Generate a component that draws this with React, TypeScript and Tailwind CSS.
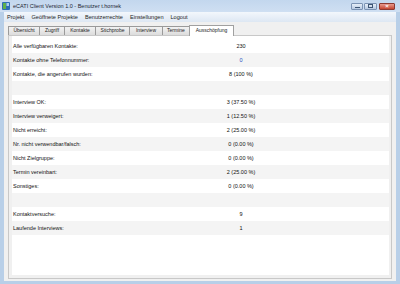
import React from 'react';

type Row = { label: string; value: string; blue?: boolean };

const rows: Row[] = [
  { label: 'Alle verfügbaren Kontakte:', value: '230' },
  { label: 'Kontakte ohne Telefonnummer:', value: '0', blue: true },
  { label: 'Kontakte, die angerufen wurden:', value: '8 (100 %)' },
  { label: '', value: '' },
  { label: 'Interview OK:', value: '3 (37.50 %)' },
  { label: 'Interview verweigert:', value: '1 (12.50 %)' },
  { label: 'Nicht erreicht:', value: '2 (25.00 %)' },
  { label: 'Nr. nicht verwendbar/falsch:', value: '0 (0.00 %)' },
  { label: 'Nicht Zielgruppe:', value: '0 (0.00 %)' },
  { label: 'Termin vereinbart:', value: '2 (25.00 %)' },
  { label: 'Sonstiges:', value: '0 (0.00 %)' },
  { label: '', value: '' },
  { label: 'Kontaktversuche:', value: '9' },
  { label: 'Laufende Interviews:', value: '1' },
];

const menu = ['Projekt', 'Geöffnete Projekte', 'Benutzerrechte', 'Einstellungen', 'Logout'];

// tab widths measured off the screenshot
const tabs = [
  { name: 'Übersicht', w: 'w-[32px]' },
  { name: 'Zugriff', w: 'w-[26px]' },
  { name: 'Kontakte', w: 'w-[32px]' },
  { name: 'Stichprobe', w: 'w-[35px]' },
  { name: 'Interview', w: 'w-[34px]' },
  { name: 'Termine', w: 'w-[28px]' },
];

function AppIcon() {
  return (
    <svg width="8" height="8" viewBox="0 0 8 8">
      <rect x="0" y="0" width="8" height="8" rx="1" fill="#2f6db5" />
      <rect x="1" y="1" width="3" height="6" fill="#5fb04a" />
      <rect x="4.5" y="1" width="2.5" height="3" fill="#a8cdf0" />
    </svg>
  );
}

export default function App() {
  return (
    <div
      className="w-[400px] h-[284px] flex flex-col bg-[#b8cfe8] overflow-hidden text-[#1e1e1e]"
      style={{ fontFamily: '"Liberation Sans", Arial, sans-serif' }}
    >
      {/* Title bar */}
      <div className="h-[12px] flex items-center bg-gradient-to-b from-[#c3d7ee] to-[#cfdff2] pl-[2px] pr-[5px]">
        <AppIcon />
        <span className="ml-[3px] text-[5.5px] text-[#1b2633]">eCATI Client Version 1.0 - Benutzer t.hornek</span>
        <div className="ml-auto flex items-center gap-[1px]">
          <div className="w-[12px] h-[7px] rounded-[1px] border border-[#7c93b3] bg-gradient-to-b from-[#e6eef8] to-[#b7c9e1] flex items-end justify-center pb-[1px]">
            <div className="w-[5px] h-[1px] bg-[#3d5574]" />
          </div>
          <div className="w-[13px] h-[7px] rounded-[1px] border border-[#7c93b3] bg-gradient-to-b from-[#e6eef8] to-[#b7c9e1] flex items-center justify-center">
            <div className="w-[5px] h-[4px] border border-[#3d5574]" />
          </div>
          <div className="ml-[1px] w-[16px] h-[7px] rounded-[1px] border border-[#8c3a33] bg-gradient-to-b from-[#e79b8f] to-[#c4422f] flex items-center justify-center text-[6px] leading-none text-white font-bold">
            ×
          </div>
        </div>
      </div>

      <div className="flex-1 flex flex-col mx-[4px] mb-[3px] bg-[#f0f0f0]">
        {/* Menu bar */}
        <div className="h-[10px] flex items-center gap-[7px] pl-[3px] bg-gradient-to-b from-[#f3f7fc] to-[#dde7f3] text-[5.6px] text-[#1e1e1e]">
          {menu.map((m) => (
            <span key={m}>{m}</span>
          ))}
        </div>

        {/* Body */}
        <div className="flex-1 flex flex-col px-[4px] pt-[2px] pb-[2px]">
          {/* Tabs */}
          <div className="flex items-end h-[11px] relative z-10">
            {tabs.map((t) => (
              <div
                key={t.name}
                className={`${t.w} h-[9px] -mr-[1px] flex items-center justify-center bg-gradient-to-b from-[#f2f2f2] to-[#dcdcdc] border border-b-0 border-[#9a9a9a] text-[5px]`}
              >
                {t.name}
              </div>
            ))}
            <div className="w-[45px] h-[11px] -mb-[1px] flex items-center justify-center bg-white border border-b-0 border-[#a0a0a0] text-[5px]">
              Ausschöpfung
            </div>
          </div>

          {/* Tab page */}
          <div className="flex-1 flex flex-col border border-[#c8c8c8] bg-[#f0f0f0] pl-[3px] pr-[2px] pb-[3px]">
            <div className="flex-1 bg-white pt-[3px] text-[5.5px] text-[#111]">
              {rows.map((r, i) => (
                <div
                  key={i}
                  className={`h-[14px] flex items-center ${i % 2 === 1 ? 'bg-[#f4f4f4]' : 'bg-white'}`}
                >
                  <span className="w-[188px] pl-[1px]">{r.label}</span>
                  <span className={`w-[82px] text-center ${r.blue ? 'text-[#1f4fbf]' : ''}`}>{r.value}</span>
                </div>
              ))}
            </div>
          </div>
        </div>
      </div>
    </div>
  );
}
